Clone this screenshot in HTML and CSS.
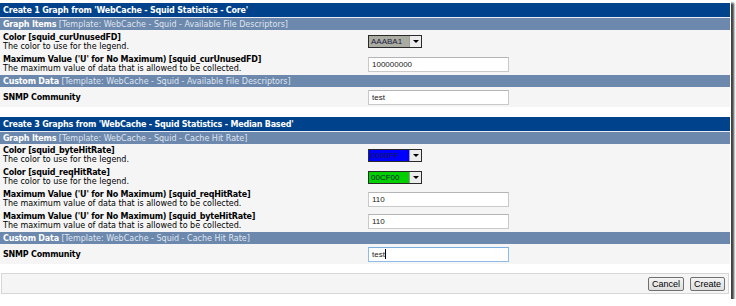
FILE: index.html
```html
<!DOCTYPE html>
<html lang="en">
  <head>
    <meta charset="utf-8">
    <title>New Graphs</title>
    <link rel="stylesheet" href="styles.css">
  </head>
  <body>
    <div class="frame">

      <table class="graphs">
        <tr class="head"><td colspan="2">Create 1 Graph from 'WebCache - Squid Statistics - Core'</td></tr>
        <tr class="sub"><td colspan="2"><b>Graph Items</b> [Template: WebCache - Squid - Available File Descriptors]</td></tr>
        <tr class="item tall">
          <td class="label"><b>Color [squid_curUnusedFD]</b><br>The color to use for the legend.</td>
          <td class="field"><div class="colorpick"><span class="swatch" style="background:#AAABA1">AAABA1</span><span class="arrow"></span></div></td>
        </tr>
        <tr class="item">
          <td class="label"><b>Maximum Value ('U' for No Maximum) [squid_curUnusedFD]</b><br>The maximum value of data that is allowed to be collected.</td>
          <td class="field"><input class="text" type="text" value="100000000"></td>
        </tr>
        <tr class="sub"><td colspan="2"><b>Custom Data</b> [Template: WebCache - Squid - Available File Descriptors]</td></tr>
        <tr class="snmp">
          <td class="label"><b>SNMP Community</b></td>
          <td class="field"><input class="text" type="text" value="test"></td>
        </tr>
      </table>

      <table class="graphs">
        <tr class="head"><td colspan="2">Create 3 Graphs from 'WebCache - Squid Statistics - Median Based'</td></tr>
        <tr class="sub"><td colspan="2"><b>Graph Items</b> [Template: WebCache - Squid - Cache Hit Rate]</td></tr>
        <tr class="item">
          <td class="label"><b>Color [squid_byteHitRate]</b><br>The color to use for the legend.</td>
          <td class="field"><div class="colorpick"><span class="swatch" style="background:#0000FF">0000FF</span><span class="arrow"></span></div></td>
        </tr>
        <tr class="item">
          <td class="label"><b>Color [squid_reqHitRate]</b><br>The color to use for the legend.</td>
          <td class="field"><div class="colorpick"><span class="swatch" style="background:#00CF00">00CF00</span><span class="arrow"></span></div></td>
        </tr>
        <tr class="item">
          <td class="label"><b>Maximum Value ('U' for No Maximum) [squid_reqHitRate]</b><br>The maximum value of data that is allowed to be collected.</td>
          <td class="field"><input class="text" type="text" value="110"></td>
        </tr>
        <tr class="item">
          <td class="label"><b>Maximum Value ('U' for No Maximum) [squid_byteHitRate]</b><br>The maximum value of data that is allowed to be collected.</td>
          <td class="field"><input class="text" type="text" value="110"></td>
        </tr>
        <tr class="sub"><td colspan="2"><b>Custom Data</b> [Template: WebCache - Squid - Cache Hit Rate]</td></tr>
        <tr class="snmp">
          <td class="label"><b>SNMP Community</b></td>
          <td class="field"><div class="text focus">test<span class="caret"></span></div></td>
        </tr>
      </table>

      <div class="actions">
        <button type="button" class="btn">Cancel</button>
        <button type="button" class="btn">Create</button>
      </div>

    </div>
  </body>
</html>
```

FILE: styles.css
```css
body {
  margin: 0;
  background: #ffffff;
  font-family: "DejaVu Sans", Verdana, sans-serif;
  font-size: 8px;
  color: #000000;
}
b {
  letter-spacing: -0.2px;
}
.frame {
  width: 730px;
  height: 296px;
  padding: 3px 1px 0 0;
  background: #ffffff;
  box-shadow: 3px 3px 2px rgba(0, 0, 0, 0.75);
}
.graphs {
  width: 730px;
  border-collapse: collapse;
  background: #f5f5f5;
  margin-bottom: 10px;
}
.graphs td {
  padding: 0 3px;
  vertical-align: middle;
  line-height: 9px;
}
.head td {
  height: 14px;
  background: #00438c;
  color: #ffffff;
  font-weight: bold;
  letter-spacing: -0.2px;
  border-bottom: 1px solid #e8edf4;
}
.sub td {
  height: 12px;
  background: #6d88ad;
  color: #dfe6ef;
}
.sub b {
  color: #ffffff;
}
.item td {
  height: 22px;
}
.item.tall td {
  height: 23px;
}
.snmp td {
  height: 20px;
}
.label {
  width: 359px;
}
.field {
  padding-left: 3px;
}
.colorpick {
  display: flex;
  width: 52px;
  height: 11px;
  border: 1px solid #2a2a2a;
  font-family: "Liberation Sans", Arial, sans-serif;
  font-size: 8px;
}
.swatch {
  flex: 1;
  padding-left: 2px;
  line-height: 11px;
  color: #1a1a40;
}
.arrow {
  width: 11px;
  background: #ececec;
  border-left: 1px solid #9a9a9a;
  display: flex;
  align-items: center;
  justify-content: center;
}
.arrow::after {
  content: "";
  border-left: 3px solid transparent;
  border-right: 3px solid transparent;
  border-top: 3px solid #000000;
}
.text {
  box-sizing: border-box;
  width: 141px;
  height: 15px;
  margin: 0;
  padding: 0 3px;
  border: 1px solid #c9c9c9;
  border-top-color: #b5b5b5;
  background: #ffffff;
  font-family: "Liberation Sans", Arial, sans-serif;
  font-size: 8px;
  line-height: 13px;
  color: #222222;
  outline: none;
}
.focus {
  border-color: #8dbce8;
  border-top-color: #7aaee0;
}
.caret {
  display: inline-block;
  width: 1px;
  height: 10px;
  background: #000000;
  vertical-align: middle;
}
.actions {
  box-sizing: border-box;
  height: 21px;
  margin-top: -1px;
  width: 728px;
  margin-left: 1px;
  border: 1px solid #d6d6d6;
  background: #f5f5f5;
  display: flex;
  justify-content: flex-end;
  align-items: center;
  gap: 6px;
  padding-right: 3px;
}
.btn {
  height: 14px;
  padding: 0 3px;
  border: 1px solid #707070;
  border-radius: 2px;
  background: linear-gradient(#f4f4f4, #dedede);
  font-family: "Liberation Sans", Arial, sans-serif;
  font-size: 9px;
  line-height: 12px;
  color: #000000;
}
```
